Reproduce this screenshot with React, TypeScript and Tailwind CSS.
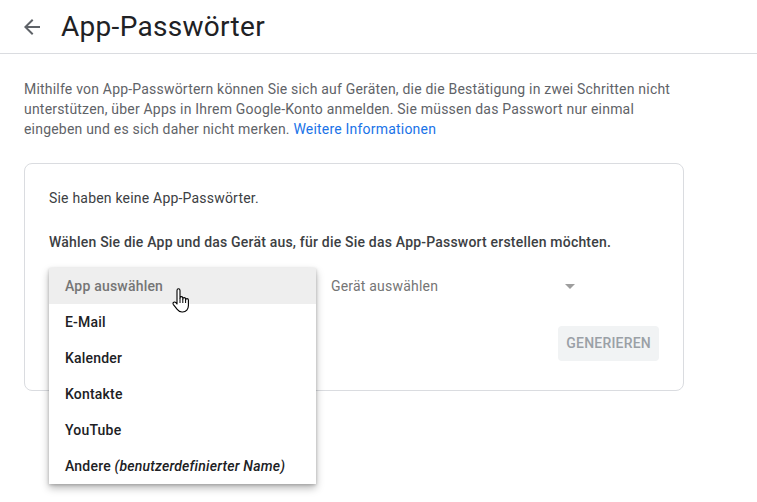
import React from "react";

const apps = ["E-Mail", "Kalender", "Kontakte", "YouTube"];

const HandCursor = () => (
  <svg width="20" height="26" viewBox="0 0 20 26" className="absolute left-[122px] top-[20px]">
    <path
      d="M6 2.5c0-1 .7-1.7 1.5-1.7S9 1.5 9 2.5V10c0-.8.6-1.4 1.4-1.4s1.4.6 1.4 1.4v1c0-.8.6-1.4 1.4-1.4s1.4.6 1.4 1.4v1c0-.8.6-1.4 1.4-1.4s1.4.6 1.4 1.4v5.5c0 3.5-2.2 6.5-5.8 6.5H11c-2.2 0-3.6-1-4.8-2.6L2.4 16.6c-.6-.8-.5-1.8.3-2.3.7-.5 1.6-.3 2.2.4L6 16V2.5z"
      fill="#fff"
      stroke="#000"
      strokeWidth="1.1"
      strokeLinejoin="round"
    />
    <path d="M9 10v5M11.8 11v4M14.6 12v3" stroke="#000" strokeWidth="1" />
  </svg>
);

export default function App() {
  return (
    <div className="w-[757px] h-[502px] bg-white overflow-hidden font-['Roboto',sans-serif] tracking-[0.2px]">
      <div className="h-[54px] flex items-center border-b border-[#dadce0] pl-5">
        <svg width="24" height="24" viewBox="0 0 24 24" fill="#5f6368">
          <path d="M20 11H7.83l5.59-5.59L12 4l-8 8 8 8 1.41-1.41L7.83 13H20v-2z" />
        </svg>
        <h1 className="ml-[17px] text-[28px] tracking-[0.3px] text-[#202124] leading-none">App-Passwörter</h1>
      </div>

      <div className="px-6">
        <p className="mt-[25px] text-[14px] leading-5 text-[#5f6368] w-[680px]">
          Mithilfe von App-Passwörtern können Sie sich auf Geräten, die die Bestätigung in zwei Schritten nicht
          <br />
          unterstützen, über Apps in Ihrem Google-Konto anmelden. Sie müssen das Passwort nur einmal
          <br />
          eingeben und es sich daher nicht merken. <span className="text-[#1a73e8]">Weitere Informationen</span>
        </p>

        <div className="mt-6 w-[660px] h-[228px] border border-[#dadce0] rounded-lg px-6 pt-6">
          <div className="text-[14px] leading-5 text-[#3c4043]">Sie haben keine App-Passwörter.</div>
          <div className="mt-6 text-[14px] leading-5 text-[#3c4043] font-medium">
            Wählen Sie die App und das Gerät aus, für die Sie das App-Passwort erstellen möchten.
          </div>

          <div className="relative mt-4 h-9 flex items-center">
            <div className="w-[266px] pl-4 text-[14px] text-[#5f6368]">App auswählen</div>
            <div className="ml-4 w-[250px] flex items-center justify-between text-[14px] text-[#757575]">
              <span>Gerät auswählen</span>
              <svg width="10" height="5" viewBox="0 0 10 5" className="mr-[6px]">
                <path d="M0 0h10L5 5z" fill="#9e9e9e" />
              </svg>
            </div>

            <div className="absolute left-0 top-0 w-[267px] bg-white shadow-[0_4px_8px_rgba(0,0,0,0.28),0_1px_3px_rgba(0,0,0,0.2)] z-10">
              <div className="relative h-9 flex items-center pl-4 bg-[#eeeeee] text-[14px] font-medium text-[#757575]">
                App auswählen
                <HandCursor />
              </div>
              {apps.map((a) => (
                <div key={a} className="h-9 flex items-center pl-4 text-[14px] font-medium text-[#202124]">
                  {a}
                </div>
              ))}
              <div className="h-9 flex items-center pl-4 text-[14px] font-medium text-[#202124]">
                Andere&nbsp;<i>(benutzerdefinierter Name)</i>
              </div>
            </div>
          </div>

          <div className="mt-[22px] flex justify-end">
            <div className="h-[35px] px-2 flex items-center rounded bg-[#f1f3f4] text-[14px] font-medium text-[#9aa0a6]">
              GENERIEREN
            </div>
          </div>
        </div>
      </div>
    </div>
  );
}
